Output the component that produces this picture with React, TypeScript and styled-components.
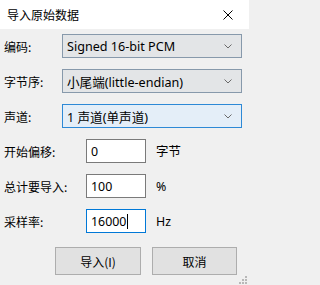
import React from "react";
import styled, { createGlobalStyle } from "styled-components";

const GlobalStyle = createGlobalStyle`
    html, body {
        margin: 0;
        padding: 0;
        background: #f0f0f0;
    }
    body {
        font-family: "Noto Sans", "Noto Sans CJK SC", sans-serif;
        font-size: 12px;
        color: #000;
    }
`;

const Window = styled.div`
    position: relative;
    width: 249px;
    height: 285px;
    background: #f0f0f0;
    overflow: hidden;
`;
const TitleBar = styled.div`
    display: flex;
    align-items: center;
    justify-content: space-between;
    height: 29px;
    padding: 0 16px 0 7px;
    background: #fff;
`;
const Title = styled.div`
    font-family: "Noto Sans CJK SC", sans-serif;
    font-size: 12px;
    line-height: 14px;
`;
const Form = styled.div`
    display: flex;
    flex-direction: column;
    gap: 11px;
    padding: 5px 7px 0 4px;
`;
const Row = styled.div<{ $labelWidth: number }>`
    display: grid;
    grid-template-columns: ${(p) => p.$labelWidth}px auto auto;
    align-items: center;
    justify-content: start;
    height: 24px;
`;
const Label = styled.div`
    font-family: "Noto Sans CJK SC", sans-serif;
    font-size: 12px;
`;
const Combo = styled.div<{ $focused?: boolean }>`
    box-sizing: border-box;
    display: flex;
    align-items: center;
    justify-content: space-between;
    width: 180px;
    height: 24px;
    padding: 0 9px 0 4px;
    border: 1px solid ${(p) => (p.$focused ? "#2d89d6" : "#8799ab")};
    background: ${(p) => (p.$focused ? "#e4eef8" : "#e3e5e7")};
    font-family: "Noto Sans", "Noto Sans CJK SC", sans-serif;
    font-size: 12.6px;
    white-space: nowrap;
`;
const Field = styled.div<{ $focused?: boolean }>`
    box-sizing: border-box;
    display: flex;
    align-items: center;
    width: 60px;
    height: 24px;
    padding: 0 4px;
    border: 1px solid ${(p) => (p.$focused ? "#0078d7" : "#7a7a7a")};
    background: #fff;
    font-family: "Noto Sans", sans-serif;
    font-size: 12.4px;
`;
const Caret = styled.span`
    display: inline-block;
    width: 1px;
    height: 15px;
    margin-left: 1px;
    background: #000;
`;
const Unit = styled.div`
    margin-left: 10px;
    font-family: "Noto Sans", "Noto Sans CJK SC", sans-serif;
    font-size: 12.4px;
`;
const ButtonRow = styled.div`
    display: flex;
    gap: 11px;
    padding: 3px 0 0 51px;
`;
const Button = styled.div<{ $width: number }>`
    box-sizing: border-box;
    display: flex;
    align-items: center;
    justify-content: center;
    width: ${(p) => p.$width}px;
    height: 28px;
    border: 1px solid #adadad;
    background: #e1e1e1;
    font-family: "Noto Sans CJK SC", sans-serif;
    font-size: 12px;
`;
const Grip = styled.svg`
    position: absolute;
    right: 2px;
    bottom: 1px;
`;

const Chevron = () => (
    <svg width="8" height="5" viewBox="0 0 8 5">
        <path d="M0.5 0.5 L4 4 L7.5 0.5" fill="none" stroke="#6a6a6a" strokeWidth="1" />
    </svg>
);

const CloseIcon = () => (
    <svg width="10" height="10" viewBox="0 0 10 10">
        <path d="M0.5 0.5 L9.5 9.5 M9.5 0.5 L0.5 9.5" stroke="#000" strokeWidth="1" />
    </svg>
);

const App = () => {
    return (
        <Window>
            <GlobalStyle />
            <TitleBar>
                <Title>导入原始数据</Title>
                <CloseIcon />
            </TitleBar>
            <Form>
                <Row $labelWidth={58}>
                    <Label>编码:</Label>
                    <Combo>
                        <span>Signed 16-bit PCM</span>
                        <Chevron />
                    </Combo>
                </Row>
                <Row $labelWidth={58}>
                    <Label>字节序:</Label>
                    <Combo>
                        <span>小尾端(little-endian)</span>
                        <Chevron />
                    </Combo>
                </Row>
                <Row $labelWidth={58}>
                    <Label>声道:</Label>
                    <Combo $focused>
                        <span>1 声道(单声道)</span>
                        <Chevron />
                    </Combo>
                </Row>
                <Row $labelWidth={82}>
                    <Label>开始偏移:</Label>
                    <Field>0</Field>
                    <Unit>字节</Unit>
                </Row>
                <Row $labelWidth={82}>
                    <Label>总计要导入:</Label>
                    <Field>100</Field>
                    <Unit>%</Unit>
                </Row>
                <Row $labelWidth={82}>
                    <Label>采样率:</Label>
                    <Field $focused>
                        16000
                        <Caret />
                    </Field>
                    <Unit>Hz</Unit>
                </Row>
                <ButtonRow>
                    <Button $width={86}>导入(I)</Button>
                    <Button $width={85}>取消</Button>
                </ButtonRow>
            </Form>
            <Grip width="8" height="8" viewBox="0 0 8 8">
                <rect x="6" y="0" width="2" height="2" fill="#b8b8b8" />
                <rect x="3" y="3" width="2" height="2" fill="#b8b8b8" />
                <rect x="6" y="3" width="2" height="2" fill="#b8b8b8" />
                <rect x="0" y="6" width="2" height="2" fill="#b8b8b8" />
                <rect x="3" y="6" width="2" height="2" fill="#b8b8b8" />
                <rect x="6" y="6" width="2" height="2" fill="#b8b8b8" />
            </Grip>
        </Window>
    );
};

export default App;
